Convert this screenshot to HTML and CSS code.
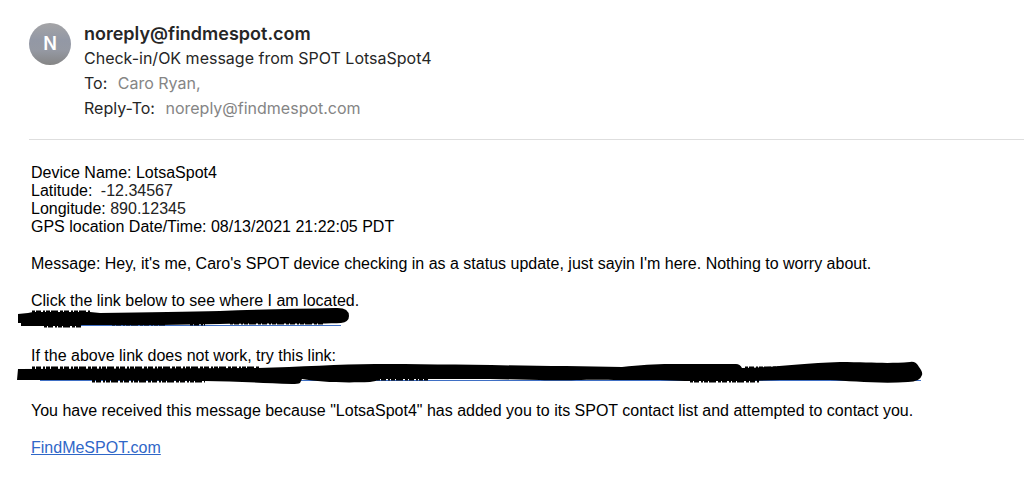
FILE: index.html
```html
<!DOCTYPE html>
<html lang="en">

<head>
    <meta charset="UTF-8">
    <meta name="viewport" content="width=device-width, initial-scale=1.0">
    <title>Check-in/OK message from SPOT LotsaSpot4</title>
    <link rel="stylesheet" href="styles.css">
</head>

<body>

    <header class="mail-header">
        <div class="avatar">N</div>
        <div class="mail-info">
            <h1 class="sender">noreply@findmespot.com</h1>
            <p class="subject">Check-in/OK message from SPOT LotsaSpot4</p>
            <p class="field">To: <span class="value">Caro Ryan,</span></p>
            <p class="field">Reply-To: <span class="value">noreply@findmespot.com</span></p>
        </div>
    </header>

    <main class="mail-body">
        <div class="device">
            <p>Device Name: LotsaSpot4</p>
            <p>Latitude: <span class="coord latitude">-12.34567</span></p>
            <p>Longitude: <span class="coord">890.12345</span></p>
            <p>GPS location Date/Time: 08/13/2021 21:22:05 PDT</p>
        </div>

        <p>Message: Hey, it's me, Caro's SPOT device checking in as a status update, just sayin I'm here. Nothing to worry about.</p>

        <div>
            <p>Click the link below to see where I am located.</p>
            <a class="hidden-link" href="#" aria-label="Location">
                <svg class="marker" width="340" height="24" viewBox="16 306 340 24">
                    <path d="M80 325.500H341" stroke="#3f6fc4" />
                    <path d="M18 314L28 313L33 312H90L100 313C150 312 190 312 220 311C260 309 300 309 335 308Q349 307 349 316Q349 322 341 323C320 324 260 323 220 324L160 325L82 325L78 326H21V323H18Z" />
                    <path class="rough" d="M32 312H90" />
                    <path class="rough" d="M44 326H81M112 324H165M190 324H205M230 323H325" />
                </svg>
            </a>
        </div>

        <div>
            <p>If the above link does not work, try this link:</p>
            <a class="hidden-link" href="#" aria-label="Location map">
                <svg class="marker" width="912" height="25" viewBox="16 361 912 25">
                    <path d="M40 380.500H921" stroke="#3f6fc4" />
                    <path d="M18 369L258 368C300 367 340 364 375 364C440 364 540 366 622 367C640 365 655 364 670 364H736Q740 364 742 368C770 368 800 363 840 362C870 362 885 364 910 362Q916 361 919 367Q923 372 922 375Q920 382 908 382C880 384 850 381 830 380H780L745 381H685L660 380H620C580 379 570 381 540 380L490 379H380Q375 382 370 382C340 383 320 382 302 379L300 383Q298 384 292 384C260 383 230 381 205 381L90 380H17Z" />
                    <path class="rough" d="M32 368H260" />
                    <path class="rough" d="M92 381H205M377 379H428M690 381H760M745 368H795" />
                </svg>
            </a>
        </div>

        <p>You have received this message because "LotsaSpot4" has added you to its SPOT contact list and attempted to contact you.</p>

        <p><a class="site-link" href="#">FindMeSPOT.com</a></p>
    </main>

</body>

</html>
```

FILE: styles.css
```css
body {
    margin: 0;
    background-color: #fff;
    color: #000;
    font-family: "Liberation Sans", Arial, sans-serif;
    font-size: 16px;
    line-height: 18px;
}

h1,
p {
    margin: 0;
}

.mail-header {
    display: flex;
    gap: 13px;
    margin-left: 29px;
    padding: 21px 0 18px;
    border-bottom: 1px solid #dedede;
    font-family: Inter, sans-serif;
    color: #262626;
}

.avatar {
    display: flex;
    flex-shrink: 0;
    align-items: center;
    justify-content: center;
    width: 42px;
    height: 42px;
    margin-top: 2px;
    border-radius: 50%;
    background: linear-gradient(#a4a4a6, #9398a5 40%, #9599a3 65%, #858585);
    color: #fff;
    font-size: 18px;
    font-weight: 600;
}

.sender {
    font-size: 18px;
    font-weight: 600;
    line-height: 25px;
}

.subject,
.field {
    font-size: 16px;
    line-height: 25px;
}

.value {
    margin-left: 6px;
    color: #858585;
}

.mail-body {
    display: flex;
    flex-direction: column;
    gap: 19px;
    padding: 24px 31px;
}

.latitude {
    margin-left: 4px;
}

.coord {
    color: #222;
}

.hidden-link {
    display: block;
    position: relative;
    height: 18px;
}

/* black marker stroke drawn over the link */
.marker {
    position: absolute;
    top: -4px;
    left: -15px;
}

.rough {
    fill: none;
    stroke: #000;
    stroke-width: 3;
    stroke-dasharray: 3 1 5 2 2 1 4 1 7 2;
}

.site-link {
    color: #2f67c8;
}
```
